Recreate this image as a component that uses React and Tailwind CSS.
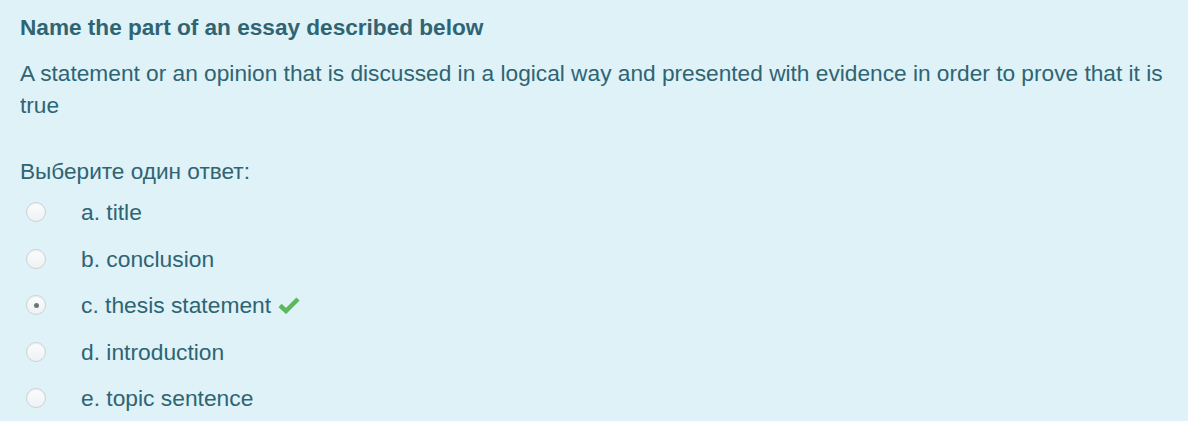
import React from "react";

const options = [
  { key: "a", text: "title" },
  { key: "b", text: "conclusion" },
  { key: "c", text: "thesis statement", checked: true, correct: true },
  { key: "d", text: "introduction" },
  { key: "e", text: "topic sentence" },
];

const Radio = ({ checked }) => (
  <span className="flex items-center justify-center w-[20px] h-[20px] rounded-full border border-[#cbd2d6] bg-gradient-to-b from-[#fbfcfd] to-[#eef2f4] shadow-[inset_0_1px_1px_rgba(0,0,0,0.06)]">
    {checked && <span className="w-[5px] h-[5px] rounded-full bg-[#707579]" />}
  </span>
);

const App = () => {
  return (
    <div
      className="w-[1188px] h-[421px] bg-[#def2f8] text-[#2f6473] overflow-hidden"
      style={{ fontFamily: '"Liberation Sans", Arial, sans-serif' }}
    >
      <div className="px-[20px] pt-[12px]">
        <h4 className="text-[22.6px] leading-[32px] font-bold">
          Name the part of an essay described below
        </h4>
        <p className="mt-[13px] text-[22.7px] leading-[32px]">
          A statement or an opinion that is discussed in a logical way and
          presented with evidence in order to prove that it is true
        </p>

        <p className="mt-[35px] text-[22.6px] leading-[32px]">Выберите один ответ:</p>

        <div className="flex flex-col mt-[1px]">
          {options.map((o) => (
            <label key={o.key} className="flex items-center h-[46.5px]">
              <span className="w-[61px] pl-[6px]">
                <Radio checked={o.checked} />
              </span>
              <span className="text-[22.8px] leading-[32px]">
                {o.key}. {o.text}
              </span>
              {o.correct && (
                <svg
                  viewBox="0 0 22 18"
                  className="w-[22px] h-[18px] ml-[7px]"
                  fill="none"
                  stroke="#5cb85c"
                  strokeWidth="4.5"
                  strokeLinejoin="miter"
                >
                  <path d="M2 9.5l6 5.5L20 3" />
                </svg>
              )}
            </label>
          ))}
        </div>
      </div>
    </div>
  );
};

export default App;
